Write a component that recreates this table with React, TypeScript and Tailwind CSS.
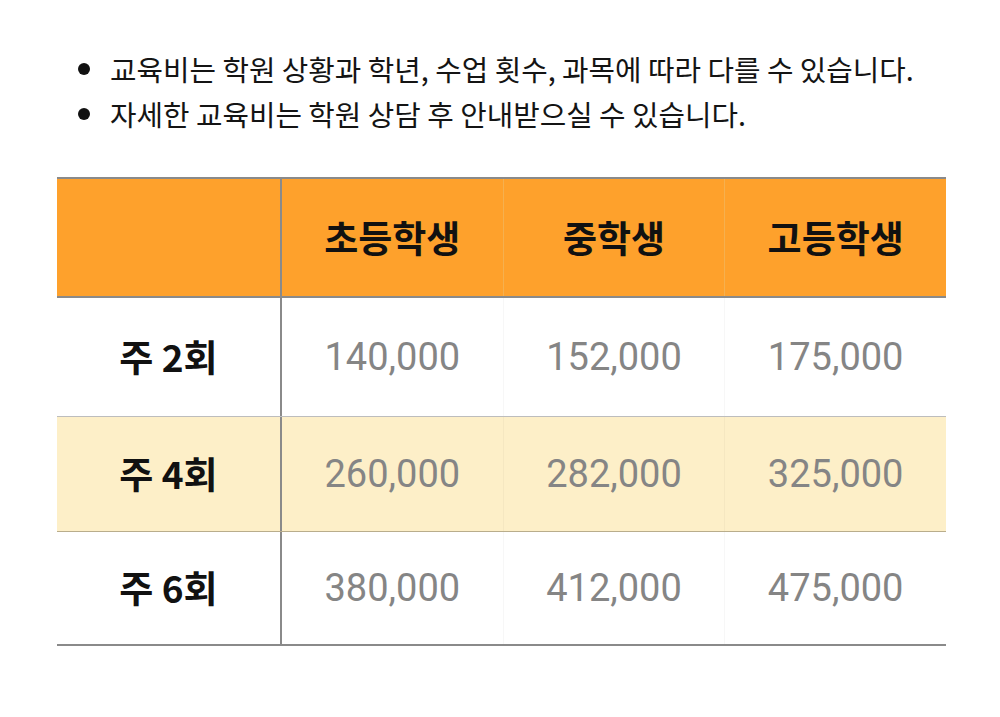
const notes = [
  '교육비는 학원 상황과 학년, 수업 횟수, 과목에 따라 다를 수 있습니다.',
  '자세한 교육비는 학원 상담 후 안내받으실 수 있습니다.',
];

const grades = ['초등학생', '중학생', '고등학생'];

const rows = [
  { label: '주 2회', prices: ['140,000', '152,000', '175,000'], bg: 'bg-white', border: 'border-b border-[#bdbdbd]', h: 'h-[119px]' },
  { label: '주 4회', prices: ['260,000', '282,000', '325,000'], bg: 'bg-[#fdefc8]', border: 'border-b border-[#b9ad8c]', h: 'h-[115px]' },
  { label: '주 6회', prices: ['380,000', '412,000', '475,000'], bg: 'bg-white', border: 'border-b-2 border-[#8a8a8a]', h: 'h-[114px]' },
];

const kr = { fontFamily: '"Noto Sans CJK KR", "Noto Sans", sans-serif' };
const num = { fontFamily: 'Roboto, "Noto Sans", sans-serif' };

export default function App() {
  return (
    <div className="w-[1000px] h-[717px] bg-white pt-[46px] px-[57px]" style={kr}>
      <ul className="flex flex-col pl-[21px]">
        {notes.map((n) => (
          <li key={n} className="flex items-center h-[45px] text-[28.8px] text-[#141414]">
            <span className="w-[12px] h-[12px] rounded-full bg-[#111] mr-[20px] shrink-0" />
            {n}
          </li>
        ))}
      </ul>

      <div className="mt-[41px] w-[889px] border-t-2 border-[#8a8a8a]">
        <div className="flex h-[119px] bg-[#fea12c] border-b-2 border-[#8a8a8a]">
          <div className="w-[225px] border-r-2 border-[#8a8a8a]" />
          {grades.map((g, i) => (
            <div
              key={g}
              className={`flex-1 flex items-center justify-center text-[37px] font-bold text-[#111] ${i > 0 ? 'border-l border-[#f5b04f]' : ''}`}
            >
              {g}
            </div>
          ))}
        </div>
        {rows.map((r) => (
          <div key={r.label} className={`flex ${r.h} ${r.bg} ${r.border}`}>
            <div className="w-[225px] border-r-2 border-[#8a8a8a] flex items-center justify-center text-[37px] font-bold text-[#111]">
              {r.label}
            </div>
            {r.prices.map((p, i) => (
              <div
                key={p}
                className={`flex-1 flex items-center justify-center text-[38px] text-[#858585] ${i > 0 ? 'border-l border-black/[0.03]' : ''}`}
                style={num}
              >
                {p}
              </div>
            ))}
          </div>
        ))}
      </div>
    </div>
  );
}
